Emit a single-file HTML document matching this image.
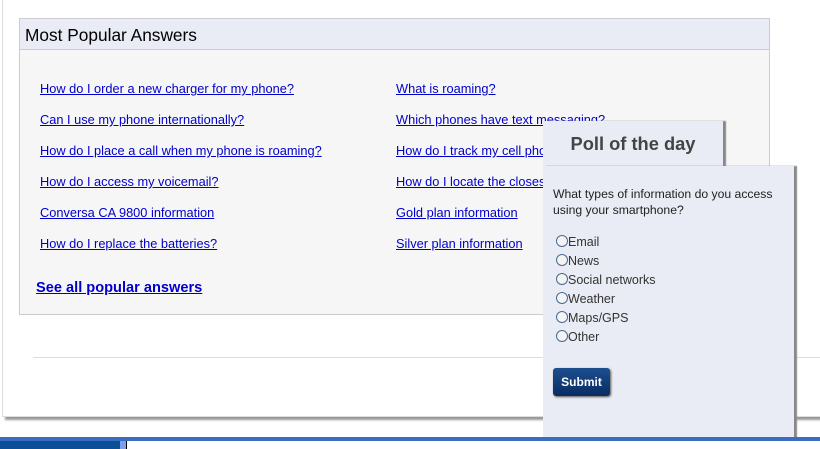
<!DOCTYPE html>
<html><head><style>
body{margin:0;width:820px;height:449px;background:#fff;position:relative;overflow:hidden;font-family:"Liberation Sans",Arial,sans-serif}
.outer{position:absolute;left:2px;top:-2px;width:830px;height:417px;border:1px solid #ddd;background:#fff;box-shadow:3px 3px 2px #999}
.box{position:absolute;left:19px;top:18px;width:749px;height:295px;border:1px solid #ccc;background:#f6f6f6}
.hd{height:30px;background:#e9ecf5;border-bottom:1px solid #ccc;font-size:17.3px;line-height:33px;padding-left:5px;color:#000}
a{color:#0000cc;text-decoration:underline;font-size:12.8px;position:absolute;white-space:nowrap}
.sep{position:absolute;left:33px;top:357px;width:800px;height:1px;background:#ddd}
.p1{position:absolute;left:543px;top:121px;width:180px;height:50px;background:#e9ecf4;box-shadow:3px 0 1px #888}
.p2{position:absolute;left:543px;top:166px;width:251px;height:280px;background:#e9ecf4;box-shadow:3px 0 1px #888}
.p2 .c{position:absolute;font-size:12.2px;color:#222}
.r{position:absolute;left:13px;font-size:12.5px;color:#333}
.r i{display:inline-block;width:12px;height:12px;border:1px solid #4a6a90;border-radius:50%;background:#f4f4f4;vertical-align:-1px;box-sizing:border-box}
.btn{position:absolute;left:10px;top:202px;width:57px;height:28px;border-radius:3px;background:linear-gradient(#1c4f8f,#0a2c63);box-shadow:1px 1px 2px #555;color:#fff;font-weight:bold;font-size:12px;line-height:28px;text-align:center}
.tb1{position:absolute;left:0;top:437px;width:820px;height:4px;background:#3a6cc0}
.tb2{position:absolute;left:0;top:441px;width:120px;height:8px;background:#0a4f98}
.tb3{position:absolute;left:120px;top:441px;width:6px;height:8px;background:#7f9fe6}
.tb4{position:absolute;left:126px;top:441px;width:694px;height:8px;background:#fff;border-left:1px solid #000}
</style></head><body>
<div class="outer"></div>
<div class="box"><div class="hd">Most Popular Answers</div></div>
<a style="left:40px;top:81px">How do I order a new charger for my phone?</a>
<a style="left:40px;top:112px">Can I use my phone internationally?</a>
<a style="left:40px;top:143px">How do I place a call when my phone is roaming?</a>
<a style="left:40px;top:174px">How do I access my voicemail?</a>
<a style="left:40px;top:205px">Conversa CA 9800 information</a>
<a style="left:40px;top:236px">How do I replace the batteries?</a>
<a style="left:396px;top:81px">What is roaming?</a>
<a style="left:396px;top:112px">Which phones have text messaging?</a>
<a style="left:396px;top:143px">How do I track my cell phone usage?</a>
<a style="left:396px;top:174px">How do I locate the closest store?</a>
<a style="left:396px;top:205px">Gold plan information</a>
<a style="left:396px;top:236px">Silver plan information</a>
<a style="left:36px;top:280px;font-weight:bold;font-size:14.6px">See all popular answers</a>
<div class="sep"></div>
<div class="p1"><div style="position:absolute;left:0;width:180px;top:12px;text-align:center;font-weight:bold;font-size:18.3px;color:#444">Poll of the day</div></div>
<div class="p2">
<div class="c" style="left:10px;top:20px;line-height:16px">What types of information do you access<br>using your smartphone?</div>
<div class="r" style="top:69px"><i></i>Email</div>
<div class="r" style="top:88px"><i></i>News</div>
<div class="r" style="top:107px"><i></i>Social networks</div>
<div class="r" style="top:126px"><i></i>Weather</div>
<div class="r" style="top:145px"><i></i>Maps/GPS</div>
<div class="r" style="top:164px"><i></i>Other</div>
<div class="btn">Submit</div>
</div>
<div class="tb1"></div><div class="tb2"></div><div class="tb3"></div><div class="tb4"></div>
</body></html>
